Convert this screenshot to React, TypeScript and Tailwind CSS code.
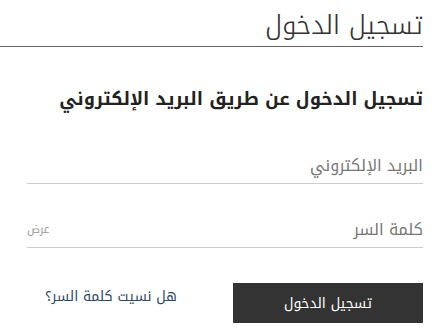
import React from "react";

export default function App() {
  const font = { fontFamily: '"Noto Kufi Arabic", "Noto Sans Arabic", "DejaVu Sans", sans-serif' };
  return (
    <div dir="rtl" className="w-[438px] h-[331px] bg-white pr-[15px] overflow-hidden" style={font}>
      <div className="border-b border-[#666] pt-[8px] pb-[2px]">
        <h1 className="text-[26px] leading-[36px] font-light text-[#333]">تسجيل الدخول</h1>
      </div>

      <div className="pl-[27px]">
        <h2 className="mt-[37px] text-[18px] leading-[30px] font-bold text-[#222]">
          تسجيل الدخول عن طريق البريد الإلكتروني
        </h2>

        <div className="mt-[39px] border-b border-[#ccc] pb-[4px]">
          <span className="text-[16px] leading-[26px] text-[#777]">البريد الإلكتروني</span>
        </div>

        <div className="mt-[33px] flex items-center justify-between border-b border-[#ccc] pb-[4px]">
          <span className="text-[16px] leading-[26px] text-[#777]">كلمة السر</span>
          <span className="text-[11px] text-[#999]">عرض</span>
        </div>

        <div className="mt-[35px] flex items-start justify-between">
          <button className="w-[190px] h-[40px] bg-[#333] text-white text-[14px]">تسجيل الدخول</button>
          <a className="ml-[18px] mt-[3px] text-[14px] text-[#2d4a63]">هل نسيت كلمة السر؟</a>
        </div>
      </div>
    </div>
  );
}
